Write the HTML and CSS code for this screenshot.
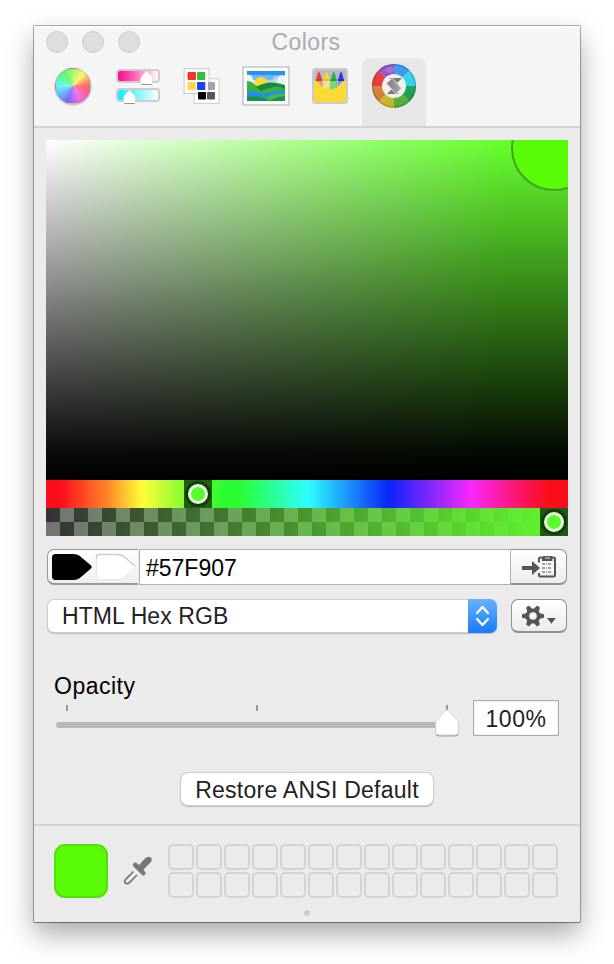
FILE: index.html
```
<!DOCTYPE html>
<html lang="en">
<head>
<meta charset="utf-8">
<title>Colors</title>
<link rel="stylesheet" href="styles.css">
</head>
<body>
<main class="window">
  <header class="header">
    <div class="titlebar">
      <div class="lights"><i></i><i></i><i></i></div>
      <h1 class="title">Colors</h1>
    </div>
    <nav class="tabs">
      <div class="tab"><div class="wheel"></div></div>
      <div class="tab">
        <svg width="46" height="40" viewBox="0 0 46 40">
          <defs>
            <linearGradient id="pink"><stop offset="0.1" stop-color="#ff1493"/><stop offset="1" stop-color="#fff"/></linearGradient>
            <linearGradient id="aqua"><stop offset="0.1" stop-color="#20edfb"/><stop offset="1" stop-color="#fff"/></linearGradient>
            <filter id="drop" x="-30%" y="-30%" width="160%" height="170%"><feDropShadow dx="0" dy="1" stdDeviation="0.7" flood-opacity="0.4"/></filter>
          </defs>
          <rect x="2" y="4" width="42" height="12" rx="3" fill="url(#pink)" stroke="#cdcdcd" stroke-width="2"/>
          <rect x="2" y="23" width="42" height="12" rx="3" fill="url(#aqua)" stroke="#cdcdcd" stroke-width="2"/>
          <path id="knob" d="M31.500 5 L36 10Q37.500 11.500 37.500 13V16Q37.500 18 35.500 18H27.500Q25.500 18 25.500 16V13Q25.500 11.500 27 10Z" fill="#fff" filter="url(#drop)"/>
          <use href="#knob" x="-17" y="19"/>
        </svg>
      </div>
      <div class="tab">
        <svg width="38" height="38" viewBox="0 0 38 38">
          <rect x="11.100" y="11.600" width="25" height="24.800" fill="#fff" stroke="#d3d3d3" stroke-width="1.200"/>
          <rect x="1.100" y="1.600" width="25" height="24.800" fill="#fff" stroke="#d0d0d0" stroke-width="1.200"/>
          <rect x="25" y="15" width="7" height="8" rx="1" fill="#a2a6ab"/>
          <rect x="15" y="25" width="8" height="7.500" rx="1"/><rect x="24" y="25" width="8" height="7.500" rx="1" fill="#58585c"/>
          <rect x="4.500" y="5" width="8.500" height="8" rx="1" fill="#f8322a"/><rect x="14" y="5" width="8.300" height="8" rx="1" fill="#2ec03f"/>
          <rect x="4.500" y="15" width="8.500" height="8" rx="1" fill="#fbd84d"/><rect x="14" y="15" width="8.300" height="8" rx="1" fill="#2040f2"/>
        </svg>
      </div>
      <div class="tab">
        <svg width="48" height="40" viewBox="0 0 48 40">
          <rect x="1" y="1" width="46" height="38" fill="#fff" stroke="#d2d2d2" stroke-width="2"/>
          <svg x="5" y="5" width="38" height="30" viewBox="0 0 38 30">
            <rect width="38" height="30" fill="#2394f5"/><path d="M0 4H38V9H0Z" fill="#6bbcf6"/><path d="M0 9H38V16H0Z" fill="#a5daf5"/>
            <path d="M0 4Q5 3 6 9Q10 10 10 15H0Z" fill="#f2f5f6"/><path d="M23 12Q25 10 26 9Q27 5 31 6Q34 3 38 5V14H23Z" fill="#eff2f3"/><path d="M22 12Q25 11 26 8Q29 5 31 6Q31 10 28 13Z" fill="#cbd0d4"/>
            <circle cx="14" cy="13" r="7" fill="#fcd835"/>
            <path d="M0 10Q5 10 8 14Q14 17 20 13Q28 10 38 14V30H0Z" fill="#3bb14c"/>
            <path d="M9 16Q20 10 28 12Q35 15 38 14V19Q25 14 14 20Z" fill="#148a3d"/>
            <path d="M0 20Q16 23 23 17Q30 13 38 18V23Q28 19 22 24L0 25Z" fill="#38ad4b"/>
            <path d="M0 21Q10 20 16 23Q24 22 30 20Q38 19 38 22V25Q28 22 23 28Q12 24 0 26Z" fill="#268cf2"/>
            <path d="M0 26Q8 24 16 27Q25 28 38 24V30H0Z" fill="#16954a"/><path d="M18 27Q30 21 38 23V25Q28 26 23 30Z" fill="#44ba4f"/>
          </svg>
        </svg>
      </div>
      <div class="tab">
        <svg width="36" height="36" viewBox="0 0 36 36">
          <rect x="1" y="1" width="34" height="34" rx="2.500" fill="#b9bbc0" stroke="#cbcbcb" stroke-width="2"/>
          <path d="M4 12 6 5Q7 3 8 5L10 12V22H4Z" fill="#f53232"/><path d="M4 13H10V22H4Z" fill="#ef8c8c"/><path d="M4 11H10V13H4Z" fill="#d93434"/>
          <path d="M11.500 12 13.500 5Q14.500 3 15.500 5L17.500 12V24H11.500Z" fill="#fada2c"/><path d="M11.500 13H17.500V24H11.500Z" fill="#f5e38e"/><path d="M11.500 11H17.500V13H11.500Z" fill="#e3c02a"/>
          <path d="M18.700 12 20.700 5Q21.700 3 22.700 5L24.700 12V24H18.700Z" fill="#25b642"/><path d="M18.700 13H24.700V24H18.700Z" fill="#77d779"/><path d="M18.700 11H24.700V13H18.700Z" fill="#1f9c3a"/>
          <path d="M26 12 28 5Q29 3 30 5L32 12V22H26Z" fill="#263fec"/><path d="M26 13H32V22H26Z" fill="#8b91ee"/><path d="M26 11H32V13H26Z" fill="#2034c4"/>
          <path d="M2 13H4Q6 13 7 15Q11 21 18 21.500Q25 21 29 15Q30 13 32 13H34V34H2Z" fill="#fbd936"/>
        </svg>
      </div>
      <div class="tab active">
        <svg width="44" height="44" viewBox="-22 -22 44 44">
          <defs><linearGradient id="shade" x2="0" y2="1"><stop stop-color="#fff" stop-opacity=".08"/><stop offset="1" stop-opacity=".1"/></linearGradient>
          <linearGradient id="steel"><stop stop-color="#7e7b80"/><stop offset="1" stop-color="#aaa6ab"/></linearGradient></defs>
          <path d="M0 0V-22A22 22 0 0 1 15.600-15.600Z" fill="#2c98f4"/><path d="M0 0 15.600-15.600A22 22 0 0 1 22 0Z" fill="#27d9f5"/>
          <path d="M0 0H22A22 22 0 0 1 15.600 15.600Z" fill="#1ea65a"/><path d="M0 0 15.600 15.600A22 22 0 0 1 0 22Z" fill="#5bbd3b"/>
          <path d="M0 0V22A22 22 0 0 1-15.600 15.600Z" fill="#d9c42f"/><path d="M0 0-15.600 15.600A22 22 0 0 1-22 0Z" fill="#df8435"/>
          <path d="M0 0H-22A22 22 0 0 1-15.600-15.600Z" fill="#f3323a"/><path d="M0 0-15.600-15.600A22 22 0 0 1 0-22Z" fill="#8f4ac6"/>
          <ellipse cx="-4" cy="-16" rx="4" ry="3" fill="#fff" opacity=".16"/>
          <circle r="21.300" fill="url(#shade)" stroke="#222" stroke-opacity=".25" stroke-width="1.300"/>
          <circle r="12" fill="#f1eeee"/>
          <path d="M-5-8H8L3.500-3.300Z" fill="#7c797d"/><path d="M-7 8H5L-2.800 3.500Z" fill="#7c797d"/>
          <path d="M-7.500-2.800-1.600-7.800 7.500 2.300 1.800 8Z" fill="url(#steel)" stroke="#f1eeee" stroke-width=".7"/>
        </svg>
      </div>
    </nav>
  </header>

  <section class="picker">
    <div class="field"><div class="cursor"></div></div>
    <div class="strip hue"><div class="handle hue-handle"><i></i></div></div>
    <div class="strip alpha"><div class="handle alpha-handle"><i></i></div></div>
  </section>

  <section class="value-row">
    <div class="wells">
      <svg width="91" height="36" viewBox="0 0 91 36">
        <path d="M8.500 5H26Q31 5 34 8L44 16.500Q45.500 18 44 19.500L34 28Q31 31 26 31H8.500Q5 31 5 27.500V8.500Q5 5 8.500 5Z"/>
        <path d="M52.500 5.500H70Q75 5.500 78 8.500L88 17Q89 18 88 19L78 27.500Q75 30.500 70 30.500H52.500Q49.500 30.500 49.500 27.500V8.500Q49.500 5.500 52.500 5.500Z" fill="#fff" stroke="#e6e6e6"/>
        <path d="M49.500 10V8.500Q49.500 5.500 52.500 5.500H70Q75 5.500 78 8.500L88 17" fill="none" stroke="#cfcfcf" stroke-width="1.500"/>
      </svg>
    </div>
    <div class="hex">#57F907</div>
    <div class="button copy">
      <svg width="36" height="24" viewBox="0 0 36 24">
        <path d="M1 11H11V6L19 13 11 20V15H1Z" fill="#555"/>
        <path d="M18 7.500V4Q18 2.500 19.500 2.500H32.500Q34 2.500 34 4V20Q34 21.500 32.500 21.500H19.500Q18 21.500 18 20V18" fill="none" stroke="#555" stroke-width="2"/>
        <path d="M21 6V2H22V1H31V2H31.500V6Z" fill="#555"/><path d="M24 3H29" stroke="#ddd" stroke-width="1"/>
        <path d="M21 9H31M21 13H31M21 17H31" stroke="#555" stroke-width="1.200" stroke-dasharray="3 1 1 1"/>
      </svg>
    </div>
  </section>

  <section class="format-row">
    <div class="select"><span>HTML Hex RGB</span>
      <b class="stepper"><svg width="15" height="22" viewBox="0 0 15 22"><path d="M2 8 7.500 2 13 8M2 14 7.500 20 13 14" fill="none" stroke="#fff" stroke-width="2.300" stroke-linecap="round" stroke-linejoin="round"/></svg></b>
    </div>
    <div class="button gear">
      <svg width="34" height="22" viewBox="0 0 34 22">
        <g transform="translate(11 11)" fill="#555">
          <path fill-rule="evenodd" d="M-7.500 0A7.500 7.500 0 1 0 7.500 0A7.500 7.500 0 1 0-7.500 0ZM-3.800 0A3.800 3.800 0 1 1 3.800 0A3.800 3.800 0 1 1-3.800 0Z"/>
          <g id="pair"><path id="tooth" d="M6.500-2.800 10-2Q11-1.800 11-1V1Q11 1.800 10 2L6.500 2.800Z"/><use href="#tooth" transform="rotate(180)"/></g>
          <use href="#pair" transform="rotate(60)"/><use href="#pair" transform="rotate(120)"/>
        </g>
        <path d="M25 13H33.800L29.400 18.800Z" fill="#555"/>
      </svg>
    </div>
  </section>

  <section class="opacity">
    <div class="range">
      <label>Opacity</label>
      <div class="ticks"><i></i><i></i><i></i></div>
      <div class="track">
        <svg class="thumb" width="30" height="32" viewBox="0 0 30 32"><path d="M15 2Q16 2 17 3L24.500 11.500Q26.500 13.500 26.500 15V23.500Q26.500 27 23 27H7Q3.500 27 3.500 23.500V15Q3.500 13.500 5.500 11.500L13 3Q14 2 15 2Z" fill="#fff" stroke="#c9c9c9" stroke-width=".8" filter="url(#drop)"/></svg>
      </div>
    </div>
    <div class="percent">100%</div>
  </section>

  <div class="restore">Restore ANSI Default</div>

  <footer class="footer">
    <div class="shelf">
      <div class="current"></div>
      <svg class="dropper" width="30" height="30" viewBox="0 0 30 30">
        <path d="M10.500 8.500Q11.500 7 13 7.500L16 10 22 3.500Q25 .5 28 2.500Q30 5 27 8L20.500 14.500 22.500 17.500Q23 18.500 22 19.700Q20.500 21 19 20L10 11Q9.500 9.500 10.500 8.500Z" fill="#777"/>
        <path d="M10 17 2.700 24.300Q.8 26.500 2.300 28Q4 29.500 6.500 27.500L13.500 20.500" fill="none" stroke="#777" stroke-width="1.700" stroke-linecap="round"/>
      </svg>
      <div class="swatches">
        <i></i><i></i><i></i><i></i><i></i><i></i><i></i><i></i><i></i><i></i><i></i><i></i><i></i><i></i>
        <i></i><i></i><i></i><i></i><i></i><i></i><i></i><i></i><i></i><i></i><i></i><i></i><i></i><i></i>
      </div>
    </div>
    <div class="grip"></div>
  </footer>
</main>
</body>
</html>
```
FILE: styles.css
```
* { box-sizing: border-box; }
body {
  margin: 0;
  padding: 26px 34px 42px;
  height: 964px;
  overflow: hidden;
  background: #fff;
  font-family: "Liberation Sans", Arial, sans-serif;
  font-size: 23px;
  color: #000;
}
svg { display: block; }
.window {
  display: flex;
  flex-direction: column;
  width: 546px;
  height: 896px;
  background: #ebebeb;
  border-radius: 1px;
  box-shadow: 0 0 0 1px rgba(0,0,0,.3), 0 1px 1px rgba(0,0,0,.2), 0 12px 28px rgba(0,0,0,.34);
}
.header {
  height: 102px;
  background: #f5f5f5;
  border-top: 2px solid #fdfdfd;
  border-bottom: 2px solid #d3d3d3;
}
.titlebar { display: grid; grid-template-columns: 120px 1fr 122px; height: 30px; }
.lights { display: flex; gap: 14px; padding: 3px 0 0 12px; }
.lights i { width: 22px; height: 22px; flex: none; border-radius: 50%; background: #dedede; border: 1px solid #cecece; }
.title { margin: 0; text-align: center; font-size: 23px; font-weight: 400; line-height: 28px; letter-spacing: .4px; color: #aaa; }
.tabs { display: flex; padding-left: 8px; }
.tab { display: flex; justify-content: center; align-items: center; width: 64px; height: 68px; padding-bottom: 12px; }
.active { background: #e7e7e7; border-radius: 8px 8px 0 0; }
.wheel {
  width: 36px; height: 36px; margin: 0 2px 1px 0;
  border-radius: 50%;
  border: 1px solid rgba(130,130,130,.3);
  background: radial-gradient(circle, rgba(255,255,255,.2), transparent 70%), conic-gradient(#a4f85e, #fcf66a 40deg, #ff6b5c 85deg, #fb5e8e 115deg, #f464f4 155deg, #7c62f8 200deg, #62b2fc 235deg, #60f4f8 270deg, #5ef89c 305deg, #60f662 330deg, #a4f85e);
  box-shadow: 0 1px 2px rgba(0,0,0,.3);
}

.picker { margin: 12px 12px 0; }
.field {
  position: relative;
  height: 340px;
  overflow: hidden;
  background: linear-gradient(to bottom, transparent, rgba(0,0,0,.53) 50%, rgba(0,0,0,.82) 78%, rgba(0,0,0,.96) 92%, #000), linear-gradient(to right, #fff, #66ff2d 88%);
}
.cursor { position: absolute; left: 465px; top: -35px; width: 86px; height: 86px; border-radius: 50%; background: #5afb07; border: 2px solid #41a31c; }
.strip { position: relative; height: 28px; }
.hue { background: linear-gradient(to right, #fc0d1b 0, #fc0d1b 15px, #ff8828 62px, #fffd38 96px, #8efd32 135px, #29fd2f 178px, #29fd2f 192px, #2dfffe 262px, #0a24fb 343px, #9127fb 390px, #fb28fc 426px, #fb1782 465px, #fc0d1b 502px, #fc0d1b); }
.alpha { background: linear-gradient(to right, rgba(95,242,45,0), #5ff22d 500px), repeating-conic-gradient(#737373 0 25%, #333 0 50%) 0 0 / 28px 28px; }
.handle { position: absolute; top: 0; display: flex; align-items: center; justify-content: center; width: 28px; height: 28px; }
.hue-handle { left: 138px; background: #235f13; }
.alpha-handle { left: 494px; background: #225911; }
.handle i { width: 20px; height: 20px; border-radius: 50%; background: #5cfb2e; border: 3px solid #e7fbdc; box-shadow: 0 0 0 3px rgba(10,45,5,.65); }

.value-row { display: flex; margin: 13px 13px 0; height: 36px; }
.wells { width: 91px; border: 1px solid #999; border-width: 1px 0 2px 1px; border-radius: 7px 0 0 7px; background: linear-gradient(#fff, #eee); }
.wells svg { margin: -1px 0 0 -1px; }
.hex { width: 372px; margin-left: 1px; padding-left: 6px; border: 1px solid #b3b3b3; background: #fff; line-height: 36px; }
.button { display: flex; align-items: center; justify-content: center; width: 56px; background: linear-gradient(#fff, #ececec); border: 1px solid #8f8f8f; }
.copy { border-left: 0; border-bottom-width: 2px; border-radius: 0 7px 7px 0; }
.format-row { display: flex; justify-content: space-between; margin: 14px 13px 0; height: 34px; }
.select { display: flex; justify-content: space-between; width: 448px; height: 32px; margin: 1px; padding-left: 14px; background: #fff; border-radius: 6px; box-shadow: 0 0 0 1px #cdcdcd, 0 1px 1px 1px rgba(0,0,0,.2); line-height: 33px; letter-spacing: .1px; color: #222; }
.stepper { display: flex; align-items: center; justify-content: center; width: 29px; height: 34px; margin: -1px -1px 0 0; border-radius: 0 7px 7px 0; background: linear-gradient(#69b2fa, #147cff); }
.gear { border-radius: 7px; border-bottom-width: 2px; }
.gear svg { margin-right: 1px; }

.opacity { display: flex; margin: 40px 21px 0 20px; height: 64px; }
.range { width: 394px; }
.range label { display: block; height: 32px; line-height: 26px; letter-spacing: .5px; }
.ticks { display: flex; justify-content: space-between; padding: 0 0 0 12px; }
.ticks i { width: 2px; height: 6px; background: #999; }
.track { position: relative; width: 392px; height: 6px; margin: 11px 0 0 2px; background: #b9b9b9; border-radius: 3px; }
.thumb { position: absolute; left: 376px; top: -14px; }
.percent { width: 86px; height: 36px; margin: 27px 0 0 auto; background: #fff; border: 1px solid #aaa; box-shadow: inset 0 0 0 1px #f3f3f3; text-align: center; line-height: 37px; color: #222; letter-spacing: .5px; }
.restore { width: 252px; height: 32px; margin: 36px auto 0; background: #fff; border-radius: 7px; box-shadow: 0 0 0 1px #cdcdcd, 0 1px 1px 1px rgba(0,0,0,.2); text-align: center; line-height: 34px; color: #222; letter-spacing: .25px; }
.footer { margin-top: auto; height: 98px; border-top: 2px solid #d2d2d2; }
.shelf { display: flex; padding: 18px 22px 0 20px; }
.current { width: 54px; height: 54px; border-radius: 11px; background: #5afb07; border: 2px solid #4ce406; }
.dropper { margin: 11px 15px 0; }
.swatches { display: grid; grid-template-columns: repeat(14, 26px); gap: 2px; }
.swatches i { height: 26px; border: 2px solid #d3d3d3; border-radius: 5px; }
.grip { width: 6px; height: 6px; margin: 12px auto 0; border-radius: 50%; background: #cdcdcd; }
```
